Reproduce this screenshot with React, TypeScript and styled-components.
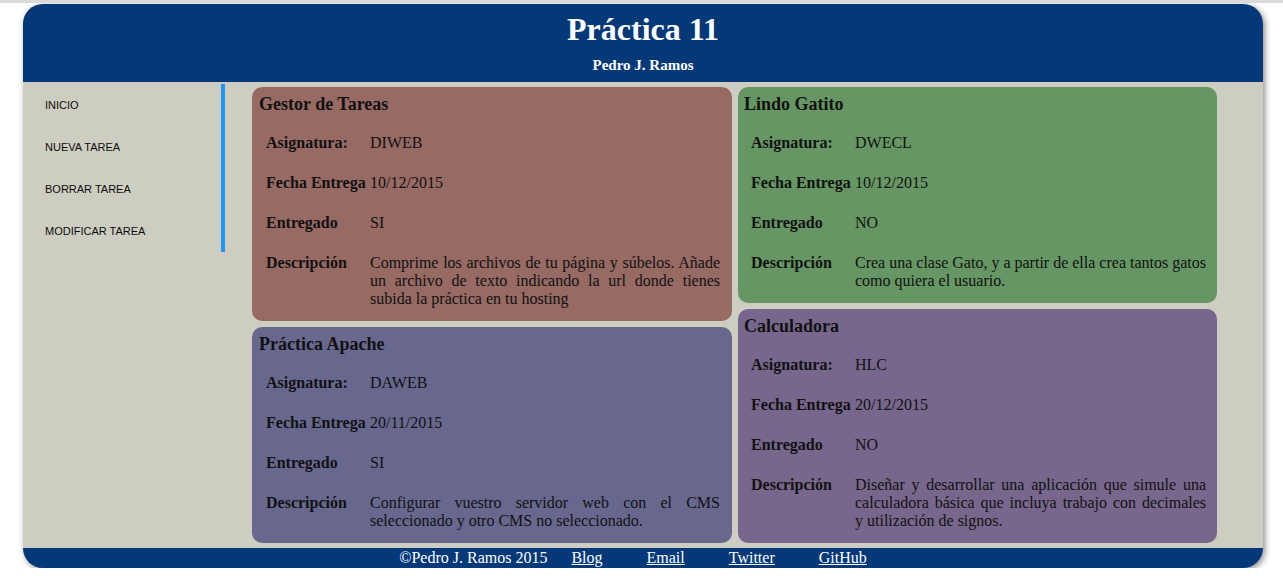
import React from 'react'
import styled, { createGlobalStyle } from 'styled-components'

const GlobalStyle = createGlobalStyle`
  html, body {
    margin: 0;
    padding: 0;
    background: #ffffff;
  }
  body {
    border-top: 3px solid #dadada;
    font-family: "Liberation Serif", "Times New Roman", serif;
  }
`

const Page = styled.div`
  padding: 1px 0 0 23px;
`

const Container = styled.div`
  width: 1240px;
  border-radius: 20px;
  overflow: hidden;
  background: #cdcdc1;
  box-shadow: 2px 2px 6px rgba(0, 0, 0, 0.45);
`

const Header = styled.header`
  background: #033879;
  color: #ffffff;
  text-align: center;
  padding: 7px 0 8px;
`

const Title = styled.h1`
  margin: 0;
  font-size: 32px;
  line-height: 36px;
  font-weight: bold;
`

const Subtitle = styled.h2`
  margin: 10px 0 0;
  font-size: 15px;
  line-height: 17px;
  font-weight: bold;
`

const Body = styled.div`
  display: flex;
  align-items: flex-start;
  height: 466px;
`

const Nav = styled.nav`
  width: 198px;
  margin-top: 2px;
  border-right: 4px solid #1f96f5;
  flex-shrink: 0;
`

const NavItem = styled.a`
  display: block;
  height: 42px;
  line-height: 42px;
  padding-left: 22px;
  font-family: "Liberation Sans", Arial, sans-serif;
  font-size: 11px;
  color: #0d0d0d;
  text-decoration: none;
`

const Main = styled.main`
  display: flex;
  gap: 6px;
  padding: 5px 0 0 27px;
`

const Column = styled.div<{ w: number }>`
  display: flex;
  flex-direction: column;
  gap: 6px;
  width: ${({ w }) => w}px;
`

const Card = styled.article<{ bg: string; side: number }>`
  background: ${({ bg }) => bg};
  border-radius: 10px;
  padding: 7px ${({ side }) => side}px 2px;
  color: #111111;
`

const CardTitle = styled.h3`
  margin: 0;
  font-size: 18px;
  line-height: 20px;
  font-weight: bold;
`

const Table = styled.table`
  margin: 9px 2px 0 4px;
  width: calc(100% - 6px);
  border-collapse: collapse;
  table-layout: fixed;
  font-size: 16px;
  line-height: 18px;

  td {
    padding: 11px 3px;
    vertical-align: top;
  }
`

const Label = styled.td`
  width: 98px;
  font-weight: bold;
  white-space: nowrap;
`

const Value = styled.td<{ justify?: boolean }>`
  text-align: ${({ justify }) => (justify ? 'justify' : 'left')};
`

const Footer = styled.footer`
  height: 20px;
  line-height: 20px;
  background: #033879;
  color: #ffffff;
  text-align: center;
  font-size: 16px;
`

const FooterLink = styled.a`
  color: #ffffff;
  text-decoration: underline;
  margin: 0 20px;
`

type Tarea = {
  titulo: string
  asignatura: string
  fecha: string
  entregado: string
  descripcion: string
  color: string
}

const izquierda: Tarea[] = [
  {
    titulo: 'Gestor de Tareas',
    asignatura: 'DIWEB',
    fecha: '10/12/2015',
    entregado: 'SI',
    descripcion:
      'Comprime los archivos de tu página y súbelos. Añade un archivo de texto indicando la url donde tienes subida la práctica en tu hosting',
    color: '#976a64',
  },
  {
    titulo: 'Práctica Apache',
    asignatura: 'DAWEB',
    fecha: '20/11/2015',
    entregado: 'SI',
    descripcion: 'Configurar vuestro servidor web con el CMS seleccionado y otro CMS no seleccionado.',
    color: '#68688f',
  },
]

const derecha: Tarea[] = [
  {
    titulo: 'Lindo Gatito',
    asignatura: 'DWECL',
    fecha: '10/12/2015',
    entregado: 'NO',
    descripcion: 'Crea una clase Gato, y a partir de ella crea tantos gatos como quiera el usuario.',
    color: '#669663',
  },
  {
    titulo: 'Calculadora',
    asignatura: 'HLC',
    fecha: '20/12/2015',
    entregado: 'NO',
    descripcion:
      'Diseñar y desarrollar una aplicación que simule una calculadora básica que incluya trabajo con decimales y utilización de signos.',
    color: '#77678c',
  },
]

function TareaCard({ tarea, side }: { tarea: Tarea; side: number }) {
  return (
    <Card bg={tarea.color} side={side}>
      <CardTitle>{tarea.titulo}</CardTitle>
      <Table>
        <tbody>
          <tr>
            <Label>Asignatura:</Label>
            <Value>{tarea.asignatura}</Value>
          </tr>
          <tr>
            <Label>Fecha Entrega</Label>
            <Value>{tarea.fecha}</Value>
          </tr>
          <tr>
            <Label>Entregado</Label>
            <Value>{tarea.entregado}</Value>
          </tr>
          <tr>
            <Label>Descripción</Label>
            <Value justify>{tarea.descripcion}</Value>
          </tr>
        </tbody>
      </Table>
    </Card>
  )
}

export default function App() {
  return (
    <Page>
      <GlobalStyle />
      <Container>
        <Header>
          <Title>Práctica 11</Title>
          <Subtitle>Pedro J. Ramos</Subtitle>
        </Header>
        <Body>
          <Nav>
            <NavItem href="#">INICIO</NavItem>
            <NavItem href="#">NUEVA TAREA</NavItem>
            <NavItem href="#">BORRAR TAREA</NavItem>
            <NavItem href="#">MODIFICAR TAREA</NavItem>
          </Nav>
          <Main>
            <Column w={480}>
              {izquierda.map((t) => (
                <TareaCard key={t.titulo} tarea={t} side={7} />
              ))}
            </Column>
            <Column w={479}>
              {derecha.map((t) => (
                <TareaCard key={t.titulo} tarea={t} side={6} />
              ))}
            </Column>
          </Main>
        </Body>
        <Footer>
          ©Pedro J. Ramos 2015 <FooterLink href="#">Blog</FooterLink>{' '}
          <FooterLink href="#">Email</FooterLink> <FooterLink href="#">Twitter</FooterLink>{' '}
          <FooterLink href="#">GitHub</FooterLink>
        </Footer>
      </Container>
    </Page>
  )
}
